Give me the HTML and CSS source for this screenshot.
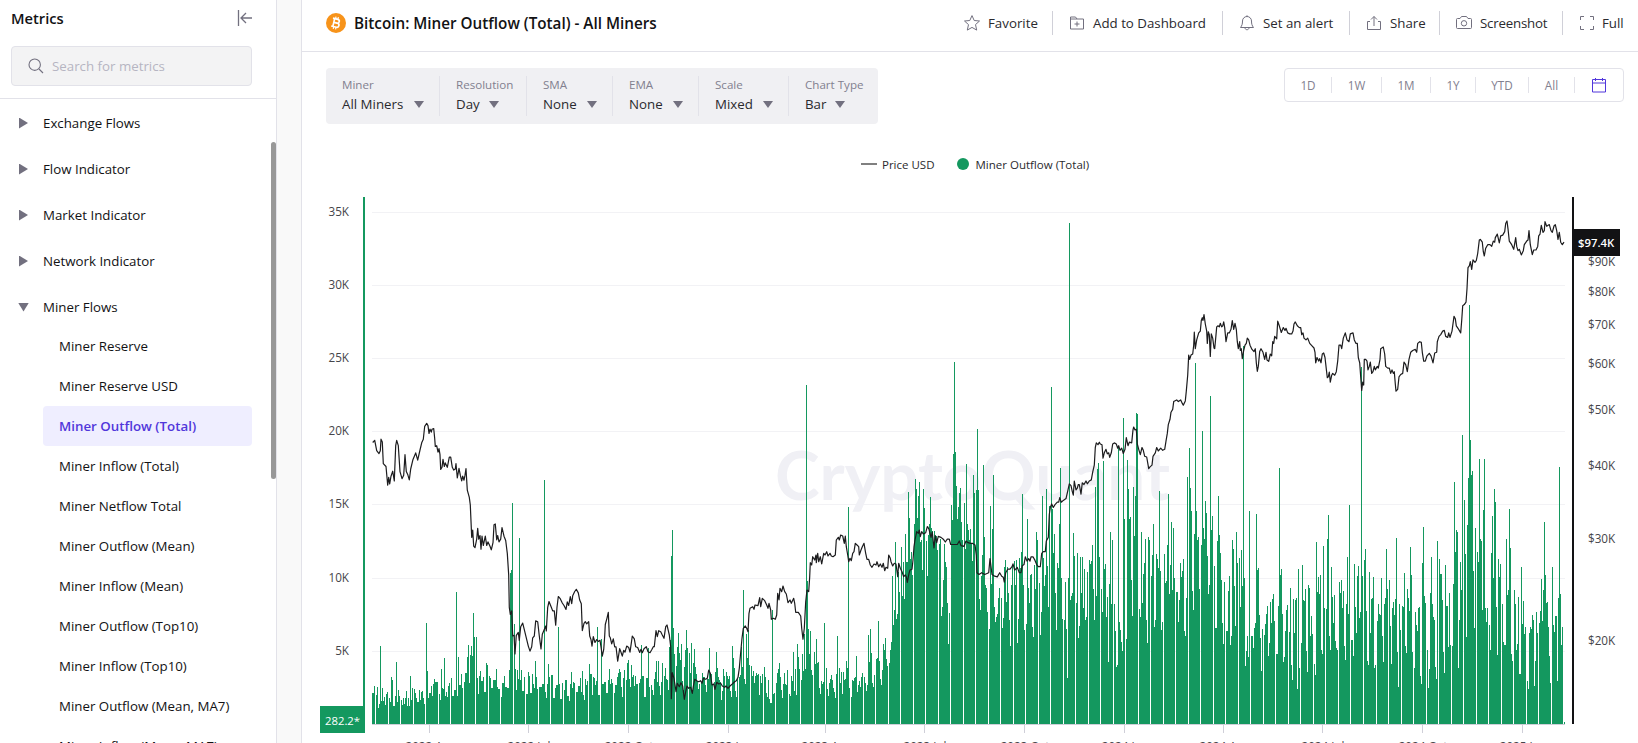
FILE: index.html
```html
<!DOCTYPE html>
<html lang="en">

<head>
    <meta charset="UTF-8">
    <meta name="viewport" content="width=device-width, initial-scale=1.0">
    <title>Bitcoin: Miner Outflow (Total) - All Miners</title>
    <link rel="stylesheet" href="styles.css">
</head>

<body>

    <aside class="sidebar">
        <div class="sidebar-head">
            <div class="sidebar-title">
                <h2>Metrics</h2>
                <svg class="collapse" viewBox="0 0 16 18" width="16" height="18">
                    <path d="M1.5 1v16M15 9H4M9 4L4 9l5 5" />
                </svg>
            </div>
            <div class="search">
                <svg viewBox="0 0 16 16" width="16" height="16">
                    <circle cx="6.7" cy="6.7" r="5.7" />
                    <path d="M11 11l4 4" />
                </svg>
                <span>Search for metrics</span>
            </div>
        </div>

        <nav class="groups">
            <div class="group"><i class="tri-right"></i>Exchange Flows</div>
            <div class="group"><i class="tri-right"></i>Flow Indicator</div>
            <div class="group"><i class="tri-right"></i>Market Indicator</div>
            <div class="group"><i class="tri-right"></i>Network Indicator</div>
            <div class="group"><i class="tri-down"></i>Miner Flows</div>
            <ul class="metrics">
                <li>Miner Reserve</li>
                <li>Miner Reserve USD</li>
                <li class="active">Miner Outflow (Total)</li>
                <li>Miner Inflow (Total)</li>
                <li>Miner Netflow Total</li>
                <li>Miner Outflow (Mean)</li>
                <li>Miner Inflow (Mean)</li>
                <li>Miner Outflow (Top10)</li>
                <li>Miner Inflow (Top10)</li>
                <li>Miner Outflow (Mean, MA7)</li>
                <li>Miner Inflow (Mean, MA7)</li>
            </ul>
            <div class="scrollbar"></div>
        </nav>
    </aside>

    <main class="panel">
        <header class="panel-head">
            <svg class="btc" viewBox="0 0 20 20" width="20" height="20">
                <circle cx="10" cy="10" r="10" fill="#f7931a" />
                <g transform="rotate(13 10 10)" fill="none" stroke="#fff" stroke-width="1.7">
                    <path d="M6 6h4.9a1.9 1.9 0 0 1 0 3.9H8M6 14h5.4a2.05 2.05 0 0 0 0-4.1M7.7 6v8" />
                    <path d="M8.6 3.7V6M11 3.7V6M8.6 14v2.3M11 14v2.3" stroke-width="1.2" />
                </g>
            </svg>
            <h1>Bitcoin: Miner Outflow (Total) - All Miners</h1>

            <div class="actions">
                <div class="action favorite">
                    <svg viewBox="0 0 16 16" width="16" height="16">
                        <path d="M8 .6l2.2 4.9 5.3.5-4 3.6 1.2 5.5L8 12.4l-4.7 2.7 1.2-5.5-4-3.6 5.300-.5z" />
                    </svg>Favorite
                </div>
                <div class="action dashboard">
                    <svg viewBox="0 0 16 16" width="16" height="16">
                        <path d="M1.500 14V2h5l1.500 2h6.500v10zM1.500 4H8M8 6.500v5M5.500 9h5" />
                    </svg>Add to Dashboard
                </div>
                <div class="action alert">
                    <svg viewBox="0 0 16 16" width="16" height="16">
                        <path d="M1.5 12.5C3 10.5 3.5 9 3.5 6a4.5 4.5 0 0 1 9 0c0 3 .5 4.5 2 6.5zM6 13c.3 2.3 3.7 2.3 4 0M8 .3V1.5" />
                    </svg>Set an alert
                </div>
                <div class="action share">
                    <svg viewBox="0 0 16 16" width="16" height="16">
                        <path d="M4 6.5H1.500v8h13v-8H12M8 11V1.500M5 4.500l3-3 3 3" />
                    </svg>Share
                </div>
                <div class="action screenshot">
                    <svg viewBox="0 0 16 16" width="16" height="16">
                        <path d="M.5 4.500q0-1 1-1H4L5.500 1.500h5L12 3.500h2.500q1 0 1 1v8q0 1-1 1h-13q-1 0-1-1z" />
                        <circle cx="8" cy="8.300" r="2.700" />
                    </svg>Screenshot
                </div>
                <div class="action full">
                    <svg viewBox="0 0 16 16" width="16" height="16">
                        <path d="M1.5 5V1.5H5M11 1.5h3.5V5M14.5 11v3.5H11M5 14.5H1.5V11" />
                    </svg>Full
                </div>
            </div>
        </header>

        <div class="controls">
            <div class="filters">
                <div class="filter miner"><label>Miner</label><span>All Miners <i class="caret"></i></span></div>
                <div class="filter resolution"><label>Resolution</label><span>Day <i class="caret"></i></span></div>
                <div class="filter sma"><label>SMA</label><span>None <i class="caret"></i></span></div>
                <div class="filter ema"><label>EMA</label><span>None <i class="caret"></i></span></div>
                <div class="filter scale"><label>Scale</label><span>Mixed <i class="caret"></i></span></div>
                <div class="filter type"><label>Chart Type</label><span>Bar <i class="caret"></i></span></div>
            </div>

            <div class="ranges">
                <span>1D</span>
                <span>1W</span>
                <span>1M</span>
                <span>1Y</span>
                <span>YTD</span>
                <span>All</span>
                <span>
                    <svg viewBox="0 0 14 15" width="14" height="15">
                        <path d="M.5 1.5h13v12.5H.5zM.5 5h13M3.5 0v3M10.5 0v3" />
                    </svg>
                </span>
            </div>
        </div>

        <div class="legend">
            <i class="line"></i>Price USD
            <i class="dot"></i>Miner Outflow (Total)
        </div>

        <svg class="chart" id="chart" viewBox="302 190 1336 553" width="1336" height="553">
            <g id="grid"></g>
            <text class="watermark" x="775" y="500" textLength="395" lengthAdjust="spacingAndGlyphs">CryptoQuant</text>
            <path id="bars" />
            <path id="price" />
            <g id="axes"></g>
        </svg>
    </main>

    <script src="chart.js"></script>

</body>

</html>
```
FILE: styles.css
```css
* {
    box-sizing: border-box;
}

body {
    margin: 0;
    height: 743px;
    display: flex;
    overflow: hidden;
    background-color: #f9f9f9;
    color: #121214;
    font-family: "Open Sans", "Noto Sans", sans-serif;
    font-size: 13.3px;
}

h1,
h2 {
    margin: 0;
    font-weight: 600;
}

svg {
    display: block;
    flex: none;
}

/* sidebar */

.sidebar {
    width: 277px;
    height: 743px;
    flex: none;
    background-color: white;
    border-right: 1px solid #e2e2e9;
    overflow: hidden;
}

.sidebar-head {
    height: 99px;
    padding: 8px 24px 0 11px;
    border-bottom: 1px solid #e2e2e9;
}

.sidebar-title {
    height: 20px;
    display: flex;
    justify-content: space-between;
    align-items: center;
}

.sidebar-title h2 {
    font-size: 14.7px;
}

.collapse {
    margin-right: -1px;
    fill: none;
    stroke: #72707f;
    stroke-width: 1.3;
}

.search {
    height: 40px;
    margin-top: 18px;
    padding-left: 16px;
    display: flex;
    align-items: center;
    gap: 8px;
    background-color: #f3f3f4;
    border: 1px solid #e2e2e9;
    border-radius: 4px;
    color: #b6b5c2;
}

.search svg {
    fill: none;
    stroke: #72707f;
    stroke-width: 1.1;
}

.groups {
    position: relative;
    padding-top: 1px;
}

.group {
    height: 46px;
    padding-left: 19px;
    display: flex;
    align-items: center;
}

.tri-right {
    width: 9px;
    height: 11px;
    margin-right: 15px;
    background-color: #72707f;
    clip-path: polygon(0 0, 100% 50%, 0 100%);
}

.tri-down {
    width: 11px;
    height: 9px;
    margin: 0 14px 0 -1px;
    background-color: #72707f;
    clip-path: polygon(0 0, 100% 0, 50% 100%);
}

.metrics {
    margin: -4px 24px 0 43px;
    padding: 0;
    list-style: none;
}

.metrics li {
    height: 40px;
    padding-left: 16px;
    line-height: 40px;
    white-space: nowrap;
}

.metrics .active {
    background-color: #efeeff;
    border-radius: 4px;
    color: #5137db;
    font-weight: 600;
}

.scrollbar {
    position: absolute;
    top: 43px;
    right: 0;
    width: 5px;
    height: 337px;
    border-radius: 3px;
    background-color: #989898;
}

/* main panel */

.panel {
    width: 1337px;
    height: 743px;
    margin-left: 24px;
    flex: none;
    background-color: white;
    border-left: 1px solid #e2e2e9;
    overflow: hidden;
}

.panel-head {
    height: 52px;
    padding: 0 14px 6px 24px;
    display: flex;
    align-items: center;
    border-bottom: 1px solid #e2e2e9;
}

.panel-head h1 {
    margin-left: 8px;
    font-size: 15.25px;
    white-space: nowrap;
}

.actions {
    margin-left: auto;
    display: flex;
}

.action {
    height: 24px;
    padding-left: 16px;
    display: flex;
    align-items: center;
    gap: 8px;
    border-left: 1px solid #d0d0d8;
    white-space: nowrap;
    color: #2a2a2e;
}

.action svg {
    fill: none;
    stroke: #72707f;
    stroke-width: 1;
}

.favorite {
    width: 88px;
    padding-left: 0;
    border-left: none;
}

.dashboard {
    width: 170px;
}

.alert {
    width: 127px;
}

.share {
    width: 90px;
}

.screenshot {
    width: 123px;
    letter-spacing: -0.2px;
}

.full {
    width: 62px;
    gap: 7px;
}

.controls {
    padding: 16px 14px 0 24px;
    display: flex;
    justify-content: space-between;
    align-items: flex-start;
}

.filters {
    height: 56px;
    padding: 8px 0;
    display: flex;
    background-color: #f0f0f3;
    border-radius: 4px;
}

.filter {
    padding-left: 16px;
    display: flex;
    flex-direction: column;
    border-right: 1px solid #e2e2e9;
    white-space: nowrap;
}

.filter label {
    height: 18px;
    line-height: 18px;
    font-size: 11.6px;
    color: #82808f;
}

.filter span {
    display: flex;
    align-items: center;
    justify-content: space-between;
    height: 21px;
    line-height: 21px;
    color: #2a2a2e;
}

.caret {
    width: 10px;
    height: 7px;
    background-color: #72707f;
    clip-path: polygon(0 0, 100% 0, 50% 100%);
}

.miner {
    width: 114px;
    padding-right: 15px;
}

.resolution {
    width: 87px;
    padding-right: 27px;
}

.sma,
.ema {
    width: 86px;
    padding-right: 15px;
}

.scale {
    width: 90px;
    padding-right: 15px;
}

.type {
    width: 89px;
    padding-right: 33px;
    border-right: none;
}

.ranges {
    height: 34px;
    display: grid;
    grid-template-columns: 47px 50px 49px 45px 53px 46px 48px;
    align-items: center;
    border: 1px solid #e2e2e9;
    border-radius: 4px;
    font-size: 11.7px;
    color: #82808f;
}

.ranges span {
    height: 16px;
    display: flex;
    align-items: center;
    justify-content: center;
    border-right: 1px solid #e2e2e9;
}

.ranges span:last-child {
    border-right: none;
}

.ranges svg {
    fill: none;
    stroke: #5137db;
}

.legend {
    height: 66px;
    padding: 14px 0 0 559px;
    display: flex;
    align-items: center;
    font-size: 11.5px;
    color: #2a2a2e;
    white-space: nowrap;
}

.legend .line {
    width: 16px;
    height: 2px;
    margin-right: 5px;
    background-color: #808080;
}

.legend .dot {
    width: 12px;
    height: 12px;
    margin: 0 7px 0 22px;
    border-radius: 50%;
    background-color: #14985f;
}

/* chart */

.chart text {
    font-size: 11.7px;
    fill: #45454a;
}

.chart .grid-line {
    stroke: #f2f2f5;
}

.chart .tick {
    stroke: #cfcfd8;
}

.chart .watermark {
    font-family: Lato, sans-serif;
    font-size: 66px;
    font-weight: 700;
    fill: #f0f0f5;
}

.chart .end {
    text-anchor: end;
}

.chart .middle {
    text-anchor: middle;
}

.chart .badge-text {
    font-size: 11.3px;
    fill: white;
}

.chart .bold {
    font-weight: 600;
}

#bars {
    fill: #14985f;
    shape-rendering: crispEdges;
}

#price {
    fill: none;
    stroke: #1c1c1e;
    stroke-width: 1.2;
    stroke-linejoin: round;
}
```
FILE: chart.js
```js
const BASE = 724;
const LEFT = 372;
const RIGHT = 1565;

// each block: origin x, origin y, vertical units per px (horizontal is always 3), then "x,y" pairs
const priceBlocks = [
    [310, 180, 2.785, '188,731 194,725 200,754 207,762 211,754 213,722 217,730 220,790 228,798 233,850 236,828 239,846 243,825 248,811 253,838 257,740 260,725 265,740 270,812 276,832 281,822 285,765 289,812 293,820 298,835 302,805 309,778 317,760 323,780 330,752 335,732 340,722 344,686 350,678 354,684 357,706 360,694 364,702 366,694 371,692 374,720 376,742 380,740 384,758 387,748 390,765 392,806 396,800 399,778 403,798 406,788 412,800 418,772 422,772 427,800 431,808 436,805 438,790 442,830 447,803 451,822 455,838 458,825 462,836 465,822 468,804 472,864 478,884 481,905 485,995 488,975 491,1020 495,1024 500,1000 503,970 506,1000 510,990 513,1028 516,992 520,1018 526,992 530,1018 534,1008 540,1020 544,1030 549,1010 552,960 556,958 560,1002 563,990 567,1008 572,1000 576,968 582,992 587,1004 592,1040 596,1100 598,1190 601,1210 605,1200 608,1270 612,1268 615,1320 619,1268 625,1260 628,1282 632,1244 638,1234 643,1252 649,1275 655,1298 660,1312 665,1300 668,1275 673,1270 677,1228 683,1230 688,1270 693,1306 697,1265 703,1252 707,1242 709,1256 713,1190 717,1174 724,1190 728,1200 733,1200 737,1240 741,1190 745,1160 750,1165 757,1178 762,1185 768,1196 772,1175 776,1185 781,1160 785,1180 788,1158 794,1146 799,1140 805,1150 809,1170 814,1180 817,1255 822,1235 826,1230 830,1236 836,1230 839,1270 843,1280 846,1298 850,1272 855,1288 860,1280 865,1285 870,1282 873,1300 877,1326 881,1308 884,1270 886,1238 891,1220 895,1204 898,1270 901,1275 905,1292 910,1278 914,1300 918,1300 923,1340 929,1305 933,1315 937,1326 941,1310 945,1315 950,1298 956,1302 960,1315 964,1290 967,1270 973,1278 977,1300 983,1302 989,1316'],
    [600, 380, 3, '123,808 127,818 132,806 139,800 144,815 150,818 156,808 160,800 163,800 168,752 172,770 176,752 182,755 187,765 192,775 197,740 201,735 205,752 208,765 212,800 214,956 217,878 222,895 228,935 232,910 238,920 243,908 248,918 253,958 257,935 261,918 266,925 272,922 277,940 280,920 284,898 290,902 296,905 302,902 306,910 310,895 317,898 322,895 326,870 331,880 336,915 341,912 345,928 350,907 356,912 362,910 367,918 374,922 378,918 384,925 390,918 397,912 404,905 409,902 414,892 418,865 421,830 426,775 430,745 436,738 440,745 444,755 447,700 450,685 458,680 462,688 465,675 474,677 479,653 482,680 487,655 494,662 500,675 504,685 507,670 512,690 514,718 520,715 526,718 530,705 533,640 537,660 540,625 545,635 549,618 554,635 559,642 564,668 570,660 574,670 581,655 584,670 587,697 595,697 602,708 605,745 609,778 613,745 617,665 621,630 626,635 629,590 631,548 635,555 638,530 644,540 648,525 649,548 653,520 656,545 661,530 665,552 671,520 675,525 680,515 684,528 690,520 694,528 699,530 706,525 709,480 715,472 718,480 722,465 728,468 733,490 736,468 739,500 743,525 746,545 750,535 754,542 758,520 762,515 766,490 771,495 776,500 778,525 783,510 787,500 792,490 797,520 801,538 806,538 811,555 816,562 822,552 828,555 831,545 836,560 841,552 846,562 850,550 854,572 858,562 863,565 866,525 871,535 873,545 878,558 883,550 888,552 893,590 896,550 901,565 906,575 911,590 916,585 919,590 922,607 927,580 930,570 936,568 939,540 942,500 945,480 950,455 955,460 958,450 961,470 965,455 970,462 977,458 982,440'],
    [860, 190, 2.835, '203,955 207,962 213,985 217,970 222,1015 226,980 230,1000 235,982 243,985 250,990 256,998 262,990 268,990 272,1005 282,1005 292,1005 298,995 303,1008 312,1010 318,995 324,1000 332,1002 338,1002 345,1006 349,1035 351,1085 357,1090 365,1085 374,1090 386,1085 390,1045 396,1090 404,1095 412,1097 419,1085 425,1095 430,1098 433,1112 437,1085 443,1075 450,1075 456,1068 459,1060 464,1078 472,1070 478,1085 483,1085 487,1065 492,1062 496,1040 501,1052 506,1045 510,1052 513,1040 519,1040 525,1050 530,1062 535,1068 541,1068 545,1030 550,1025 556,1025 559,995 565,985 568,920 571,900 575,890 580,900 585,892 592,885 596,885 599,872 604,885 610,880 618,875 624,850 628,833 633,838 637,855 640,865 643,825 648,850 652,845 655,835 658,835 663,862 667,830 672,835 678,825 682,833 688,825 694,822 698,800 703,780 706,730 709,717 714,722 718,715 721,720 726,722 729,760 733,745 738,735 742,748 746,745 749,758 754,745 758,720 763,717 769,720 773,732 776,725 780,738 785,732 790,747 795,735 799,702 804,725 808,715 815,717 819,680 821,672 825,680 829,678 832,720 837,738 841,750 846,730 850,738 854,755 860,757 866,790 870,785 876,780 879,755 886,745 890,730 895,740 902,732 908,738 914,735 918,712 922,690 925,665 930,650 933,630 938,622 941,600 950,595 955,600 962,595 967,605 970,610 976,598 979,570 983,525'],
    [1140, 190, 2.835, '146,468 149,480 153,468 158,465 161,440 163,403 166,450 170,425 176,405 181,400 184,370 187,362 189,370 192,353 196,380 200,400 202,435 205,402 208,410 211,472 214,408 218,420 222,448 224,450 227,420 230,388 234,385 238,388 241,378 245,388 248,385 251,374 254,390 258,430 263,405 268,405 273,395 277,370 281,395 285,378 289,395 292,430 295,450 299,430 301,455 304,450 307,478 311,455 315,440 319,435 322,420 326,425 330,440 336,452 342,458 346,450 349,490 352,514 355,500 359,458 363,450 369,460 374,480 378,460 381,482 386,486 391,465 395,470 398,430 401,435 404,415 410,422 413,372 418,385 424,404 430,390 435,398 438,392 443,405 449,408 455,408 459,400 462,380 466,374 472,385 478,390 482,390 485,410 489,405 492,420 498,425 503,420 509,435 516,442 522,448 525,460 527,490 531,475 536,485 539,478 543,490 547,465 551,462 555,475 558,500 562,532 565,530 568,516 571,545 575,525 578,520 584,525 589,515 593,485 597,440 602,440 605,450 610,420 616,405 621,425 627,430 631,408 639,405 643,425 648,435 652,435 655,475 659,490 662,530 665,568 668,545 671,553 673,480 677,480 681,485 684,510 688,500 691,488 695,520 699,515 703,500 706,510 712,500 715,505 720,480 722,450 730,445 734,465 737,500 743,505 748,505 752,520 756,510 760,520 763,515 766,550'],
    [1380, 190, 2.835, '48,570 53,565 57,530 62,523 68,520 72,488 77,495 82,515 87,480 92,460 98,455 106,452 110,460 113,435 119,430 124,432 127,460 131,485 136,485 141,470 148,463 153,470 159,490 164,462 170,460 172,430 177,415 182,410 188,400 193,398 197,415 203,418 206,405 210,418 216,400 222,358 226,365 229,385 234,392 239,400 242,405 245,370 248,328 253,325 258,318 261,280 264,220 268,215 271,203 275,225 279,198 285,205 289,200 293,180 298,142 301,140 307,148 310,175 313,187 317,165 323,155 330,155 335,160 340,145 344,148 346,135 352,125 358,150 362,130 368,128 374,118 377,95 381,88 384,110 388,145 395,155 401,168 407,135 410,160 414,172 418,168 424,184 430,172 433,155 440,145 444,142 447,115 451,155 457,183 461,170 468,170 473,160 476,130 480,125 484,100 489,120 493,115 495,90 500,103 508,98 513,115 517,120 522,102 526,98 530,115 534,140 538,120 542,148 547,155 552,148']
];

const barBlocks = [
    [310, 180, 2.785, '188,1429 191,1429 194,1409 200,1433 203,1412 206,1470 209,1458 212,1298 215,1450 218,1415 221,1450 224,1440 227,1461 230,1432 233,1426 239,1443 242,1453 245,1384 248,1393 251,1464 254,1464 257,1437 260,1342 263,1453 266,1419 269,1436 275,1447 278,1461 281,1443 284,1458 287,1443 290,1423 293,1464 296,1443 299,1464 302,1381 305,1447 308,1415 314,1418 317,1429 320,1443 326,1455 329,1419 332,1447 335,1426 338,1423 341,1443 344,1458 350,1234 353,1367 356,1443 359,1429 365,1409 368,1436 371,1404 374,1390 380,1398 389,1432 392,1447 395,1362 398,1415 401,1418 404,1331 407,1436 410,1426 413,1440 416,1409 419,1401 425,1387 428,1436 437,1419 440,1147 443,1436 446,1328 452,1406 455,1376 458,1415 464,1398 467,1373 473,1328 476,1295 479,1401 482,1323 485,1298 488,1326 491,1206 494,1273 500,1273 503,1387 506,1432 509,1381 512,1367 515,1395 521,1384 524,1426 530,1345 533,1351 539,1381 542,1387 545,1415 554,1393 560,1362 563,1412 569,1418 575,1440 578,1401 584,1381 590,1412 596,1415 599,1365 602,1095 605,1087 608,900 611,1264 614,1237 617,1362 620,1420 623,1365 626,1390 629,997 632,1393 635,1365 638,1423 644,1384 650,1432 656,1370 659,1381 662,1429 668,1376 671,1404 674,1415 677,1340 680,1384 683,1418 692,1412 698,1404 704,836 707,1426 710,1443 713,1404 716,1348 719,1384 728,1379 731,1443 737,1415 740,1406 746,1245 749,1404 755,1445 758,1401 764,1420 767,1393 776,1437 779,1451 782,1404 785,1370 788,1415 791,1398 797,1401 803,1426 806,1409 812,1387 815,1426 818,1367 821,1434 824,1447 827,1390 830,1406 833,1395 839,1348 842,1376 845,1376 848,1434 851,1384 854,1387 857,1406 860,1395 863,1245 866,1434 869,1434 875,1278 878,1404 887,1398 893,1429 896,1393 899,1362 902,1404 905,1390 908,1401 914,1429 917,1406 923,1384 926,1373 929,1362 932,1370 935,1412 938,1440 941,1387 944,1365 950,1393 953,1345 956,1337 959,1390 962,1412 965,1351 968,1384 971,1379 974,1409 977,1381 983,1404 989,1401'],
    [600, 380, 3, '122,898 125,795 128,888 131,888 134,951 137,951 140,893 143,893 146,803 149,920 155,915 158,930 161,945 164,897 167,876 170,843 173,906 176,843 179,918 182,945 185,906 188,849 194,887 197,864 200,897 203,900 206,930 209,800 212,780 215,528 218,450 221,743 224,822 227,920 230,858 233,800 236,759 239,819 242,840 245,792 248,903 251,930 254,861 257,810 260,750 263,803 269,819 272,879 275,789 278,930 281,849 284,807 287,861 290,882 293,903 296,927 299,912 305,909 308,879 314,891 317,915 320,936 323,897 329,803 332,879 335,882 338,912 341,918 344,906 347,876 350,816 353,864 356,891 359,900 362,906 365,960 368,933 371,867 374,888 380,876 383,888 386,897 389,888 392,933 395,951 398,798 401,834 404,864 407,933 410,951 413,897 419,891 422,885 425,800 428,860 431,630 434,897 437,912 440,762 443,834 446,750 449,855 455,858 458,888 461,873 464,909 467,888 470,879 473,885 476,882 479,945 482,888 485,909 488,882 494,861 497,891 500,939 503,951 506,900 509,957 512,969 515,969 518,690 521,942 524,939 530,909 533,879 536,867 539,849 542,891 545,930 548,954 551,912 554,879 557,912 560,915 563,870 569,942 572,948 575,888 578,903 581,816 584,933 587,867 590,945 593,792 596,831 599,867 605,900 608,822 611,873 614,762 617,867 620,15 623,603 626,747 629,822 632,753 635,870 638,885 644,816 647,852 650,777 653,849 656,846 659,924 662,942 665,903 668,912 671,906 674,729 680,864 683,927 686,948 689,909 692,897 695,885 698,900 701,924 704,936 707,954 710,882 713,768 719,864 722,909 725,876 728,942 731,876 734,900 737,897 740,843 743,864 746,381 749,924 755,951 758,900 761,903 764,894 767,891 770,828 773,936 776,915 779,903 782,921 785,891 788,879 794,891 797,909 800,933 803,915 806,765 809,846 812,747 815,819 818,909 821,921 824,885 830,837 833,834 836,723 839,843 842,897 845,915 848,870 851,792 854,810 857,774 860,837 863,858 869,849 872,810 875,786 878,588 881,735 884,690 887,486 890,717 893,702 896,576 899,636 905,501 908,648 911,546 914,657 917,462 920,546 926,336 929,414 932,537 935,516 938,585 944,432 947,297 950,327 953,414 956,348 959,306 962,486 965,480 968,570 971,327 974,384 980,483 983,588 986,465 989,432'],
    [860, 190, 2.835, '212,870 215,957 218,968 221,1000 224,968 227,985 230,980 233,1020 239,1005 242,990 245,1208 248,1182 251,1106 254,1003 257,1055 260,1069 263,1171 266,1287 269,1199 275,893 278,936 281,749 284,488 287,743 290,839 293,933 296,899 299,859 302,845 305,941 308,992 314,887 317,1018 320,777 323,947 326,964 329,992 332,961 335,1000 338,1052 341,808 344,859 350,851 353,678 356,851 359,1160 362,1191 365,1095 368,1035 371,780 374,984 377,1120 380,1128 383,1197 389,1245 392,896 395,1117 398,961 401,808 404,1182 407,1225 410,1211 413,1202 416,1157 419,1129 425,1157 428,1242 431,1214 434,1069 437,1049 440,1168 443,1069 446,1143 449,1219 452,1293 455,1120 458,1063 464,1052 467,1120 470,1049 473,1284 476,1216 479,1043 482,1072 485,1026 488,862 491,1120 494,1248 500,1231 503,933 506,1129 509,1171 512,1092 515,1089 518,1239 521,1267 524,1063 527,1131 530,970 533,992 539,1114 542,1262 545,1197 548,868 551,1043 554,1123 557,1092 560,848 563,1066 566,1182 569,896 575,559 578,904 581,1029 584,975 587,1143 590,1248 593,1058 596,1072 599,947 602,788 605,1100 608,1216 614,1219 617,1111 620,1245 623,1384 626,1100 629,94 632,1163 635,1151 638,1143 641,973 644,1038 650,1171 653,1029 656,1270 659,1236 662,1041 665,1143 668,1041 671,1185 674,1075 677,1219 680,1211 683,1083 689,1049 692,1060 695,1052 698,1007 701,1131 704,1219 707,842 710,1151 713,791 716,774 719,1041 725,1131 728,1197 731,768 734,1075 737,1060 740,1211 743,1154 746,1338 749,1117 752,970 755,1174 758,992 764,1174 767,1250 770,1353 773,1347 776,730 779,1225 782,1248 785,1282 788,1307 791,646 794,933 797,1273 803,766 806,848 809,934 812,927 815,1106 818,1208 821,842 824,981 827,868 830,632 833,635 839,1188'],
    [1140, 190, 2.835, '2,1211 5,970 8,1171 11,1089 14,1058 17,990 20,1219 23,1284 26,984 29,992 32,1094 38,1035 41,947 44,1239 47,1219 50,1032 53,1046 56,1072 59,853 62,1080 65,1248 68,1225 74,1032 77,1114 80,1109 83,1007 86,862 89,1146 92,1063 95,941 98,1134 101,958 104,1100 107,1086 113,1140 116,1225 119,1163 122,1058 125,1097 128,1080 131,1046 134,1250 137,1265 140,1157 143,814 149,732 152,845 155,910 158,1137 161,1191 164,975 167,491 170,910 173,992 176,984 179,1131 182,1007 188,683 191,958 194,990 197,882 200,916 203,1038 206,1146 209,1120 212,584 215,964 218,924 224,1066 227,1242 230,1242 233,995 236,868 239,978 242,1029 245,1106 248,1228 251,1287 254,1111 257,950 263,1250 266,1137 269,1094 272,1290 275,1265 278,992 281,1018 284,1123 287,1236 290,970 293,1058 299,1043 302,1182 305,1021 308,1123 311,442 314,1100 317,1350 320,1307 323,1265 326,1324 329,910 332,1211 338,1265 341,1299 344,1242 347,1228 350,919 353,1077 356,1072 359,1205 362,1270 365,1364 368,1245 374,1262 377,1231 380,1202 383,1180 386,1321 389,1284 392,1168 395,1228 398,1160 401,1146 404,1222 407,1290 413,1316 416,1180 419,788 422,1092 425,1075 428,1202 431,1338 434,1324 437,1250 440,1191 443,1177 449,1253 452,1129 455,1347 458,1389 461,1160 464,1256 467,1163 470,1157 473,1415 476,1075 479,1355 482,1284 488,1063 491,1163 494,1165 497,1131 500,1307 503,1367 506,1120 509,1129 512,1265 515,1208 518,1259 524,1344 527,1375 530,998 533,1140 536,1097 539,1146 542,1092 545,1304 548,1316 551,1009 554,1185 557,1188 563,990 566,922 569,1265 572,1304 575,1069 578,1154 581,1228 584,1148 587,1279 590,1299 593,1304 599,1111 602,1143 605,1106 608,1185 611,1137 614,1293 617,1333 620,1174 623,1041 626,1202 629,893 632,1191 638,1276 641,1321 644,1060 647,1182 650,1256 653,1094 656,1066 659,1214 662,1197 665,502 668,1094 674,1049 677,1018 680,1194 683,1335 686,1347 689,1083 692,1256 695,1160 698,1157 701,1097 704,1355 707,1347 713,1222 716,1174 719,1202 722,1205 725,1100 728,1265 731,1338 734,1174 737,1157 740,1018 743,1131 749,1106 752,1236 755,1344 758,1185 761,1168 764,1205 767,1160 770,987 773,1310 776,1409 779,1174'],
    [1380, 190, 2.835, '62,1248 68,1180 71,1182 74,1086 77,1293 80,1313 83,1131 86,1157 89,1194 92,1012 95,1092 98,1310 104,1355 107,1197 110,1233 113,1250 116,1185 119,1182 122,1378 125,1401 128,1058 131,956 134,1151 137,1171 143,1304 146,1412 149,1358 152,1143 155,1041 158,1174 161,1211 164,1219 167,1353 170,1387 173,995 179,1046 182,1089 185,1089 188,1163 191,1310 194,1370 197,1063 200,1180 203,1180 206,1296 209,1143 212,1290 218,1293 221,1117 224,828 227,1026 230,964 233,970 236,1355 239,1219 242,1055 245,1134 248,695 254,879 257,1032 260,1267 263,950 266,817 269,326 272,709 275,808 278,797 281,1080 284,1242 287,958 293,1026 296,1055 299,763 302,990 305,995 308,1191 311,907 314,763 317,1185 320,1225 323,1185 329,1233 332,1304 335,1029 338,924 341,1100 344,848 347,885 350,1182 353,1318 356,1046 359,1097 362,1060 368,1174 371,1282 374,1290 377,1290 380,990 383,1148 386,1134 389,905 392,1015 395,1316 398,1335 404,1134 407,1174 410,1304 413,1287 416,1154 419,1372 422,1372 425,1069 428,1231 431,1165 434,1259 437,1239 443,1392 446,1415 449,1256 452,1239 455,1245 458,1205 461,1219 464,1406 467,1335 470,1197 473,1256 479,1228 482,1194 485,1103 488,1222 491,1134 494,941 497,1092 500,1171 503,1168 506,1239 509,1321 512,1398 518,1069 521,1233 524,1253 527,1208 530,1208 533,1392 536,1157 539,785 542,1146 545,1290 548,1239 554,1507']
];

function readBlocks(blocks) {
    const points = [];
    blocks.forEach(([x0, y0, unit, pairs]) => {
        pairs.split(' ').forEach(pair => {
            const [x, y] = pair.split(',').map(Number);
            points.push([x0 + x / 3, y0 + y / unit]);
        });
    });
    return points;
}

function drawPrice() {
    const points = readBlocks(priceBlocks);
    document.getElementById('price').setAttribute('d',
        'M' + points.map(([x, y]) => `${x.toFixed(1)} ${y.toFixed(1)}`).join('L'));
}

function drawBars() {
    const tops = {};
    readBlocks(barBlocks).forEach(([x, y]) => {
        tops[Math.floor(x)] = Math.round(y);
    });

    // one blank column roughly every 12.5px
    const gaps = new Set();
    for (let x = 375.6; x < RIGHT; x += 12.505) {
        gaps.add(Math.floor(x));
    }

    let d = '';
    for (let x = LEFT; x < RIGHT; x++) {
        if (gaps.has(x)) continue;
        let top = tops[x];
        if (top === undefined) {
            // days without their own value take the lower neighbour
            top = Math.max(tops[x - 1] || 0, tops[x + 1] || 0) || 690;
        }
        d += `M${x} ${BASE}V${top}h1V${BASE}z`;
    }
    document.getElementById('bars').setAttribute('d', d);
}

function drawAxes() {
    let grid = '';
    let axes = '';

    [35, 30, 25, 20, 15, 10, 5].forEach((value, i) => {
        const y = Math.floor(212.5 + i * 73.1) + 0.5;
        grid += `<path class="grid-line" d="M${LEFT} ${y}H${RIGHT}"/>`;
        axes += `<text class="end" x="349" y="${y + 3.5}">${value}K</text>`;
    });

    [90, 80, 70, 60, 50, 40, 30, 20].forEach(value => {
        const y = 640.4 - Math.log(value / 20) * 251.8;
        axes += `<text x="1588" y="${(y + 4.3).toFixed(1)}">$${value}K</text>`;
    });

    const labels = ['2022 Apr', '2022 Jul', '2022 Oct', '2023 Jan', '2023 Apr', '2023 Jul', '2023 Oct', '2024 Jan', '2024 Apr', '2024 Jul', '2024 Oct', '2025 Jan'];
    const ticks = [429, 528, 628, 728, 825, 924, 1024, 1124, 1223, 1322, 1422, 1522];
    axes += `<path class="tick" d="M${LEFT} ${BASE + 0.5}H${RIGHT}"/>`;
    ticks.forEach((x, i) => {
        axes += `<path class="tick" d="M${x + 0.5} 725V733"/>`;
        axes += `<text class="middle" x="${x + 1}" y="750.5">${labels[i]}</text>`;
    });

    axes += '<rect x="363" y="197" width="2" height="528" fill="#14985f"/>';
    axes += '<rect x="320" y="706" width="45" height="27" fill="#14985f"/>';
    axes += '<text class="badge-text" x="325" y="724.5">282.2*</text>';
    axes += '<rect x="1572" y="197" width="2" height="527" fill="#121214"/>';
    axes += '<rect x="1573" y="229" width="47" height="27" fill="#121214"/>';
    axes += '<text class="badge-text bold" x="1578" y="247">$97.4K</text>';

    document.getElementById('grid').innerHTML = grid;
    document.getElementById('axes').innerHTML = axes;
}

drawAxes();
drawBars();
drawPrice();
```
